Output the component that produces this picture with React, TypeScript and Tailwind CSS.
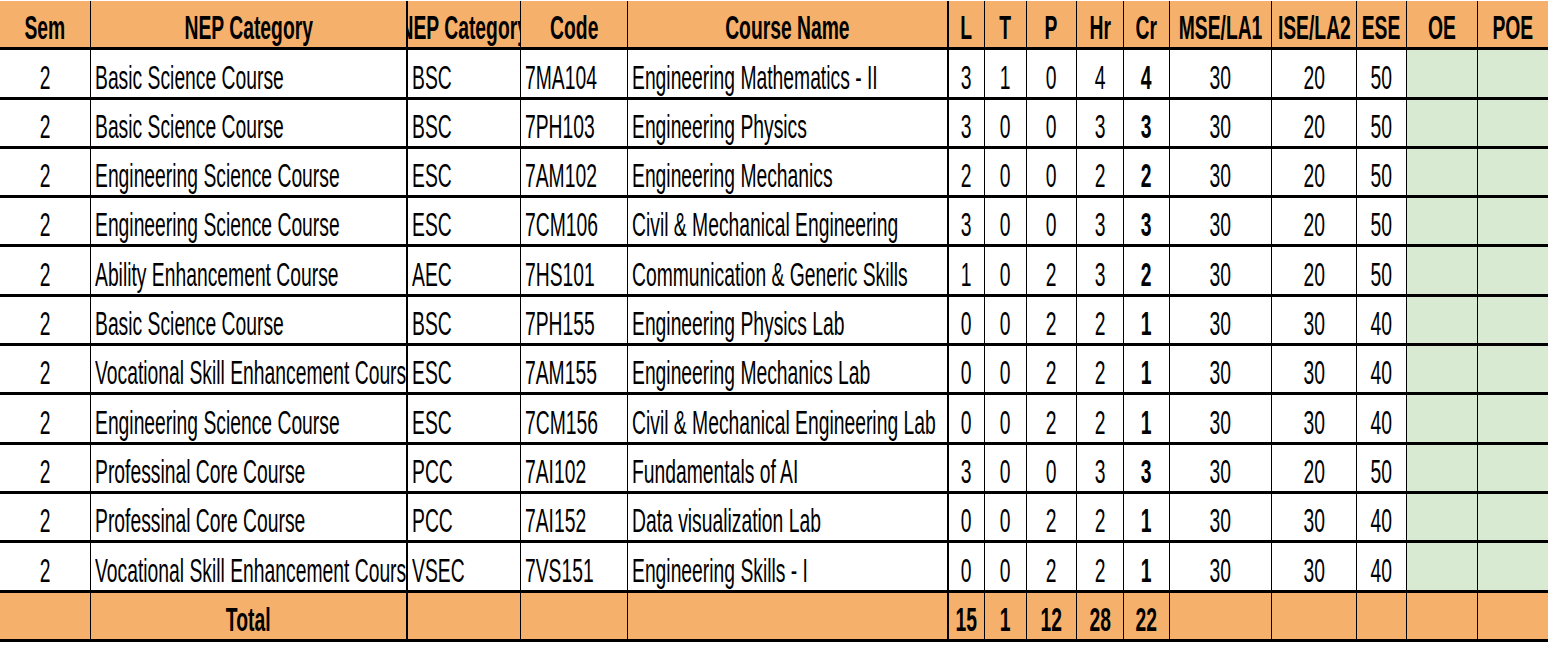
import React from "react";

type Align = "left" | "center";

const cols: { align: Align; thick?: boolean }[] = [
  { align: "center" },
  { align: "left" },
  { align: "left", thick: true },
  { align: "left" },
  { align: "left" },
  { align: "center", thick: true },
  { align: "center" },
  { align: "center" },
  { align: "center" },
  { align: "center" },
  { align: "center" },
  { align: "center" },
  { align: "center" },
  { align: "center" },
  { align: "center" },
];

const header = [
  "Sem",
  "NEP Category",
  "NEP Category",
  "Code",
  "Course Name",
  "L",
  "T",
  "P",
  "Hr",
  "Cr",
  "MSE/LA1",
  "ISE/LA2",
  "ESE",
  "OE",
  "POE",
];

const rows = [
  ["2", "Basic Science Course", "BSC", "7MA104", "Engineering Mathematics - II", "3", "1", "0", "4", "4", "30", "20", "50"],
  ["2", "Basic Science Course", "BSC", "7PH103", "Engineering Physics", "3", "0", "0", "3", "3", "30", "20", "50"],
  ["2", "Engineering Science Course", "ESC", "7AM102", "Engineering Mechanics", "2", "0", "0", "2", "2", "30", "20", "50"],
  ["2", "Engineering Science Course", "ESC", "7CM106", "Civil & Mechanical Engineering", "3", "0", "0", "3", "3", "30", "20", "50"],
  ["2", "Ability Enhancement Course", "AEC", "7HS101", "Communication & Generic Skills", "1", "0", "2", "3", "2", "30", "20", "50"],
  ["2", "Basic Science Course", "BSC", "7PH155", "Engineering Physics Lab", "0", "0", "2", "2", "1", "30", "30", "40"],
  ["2", "Vocational Skill Enhancement Course", "ESC", "7AM155", "Engineering Mechanics Lab", "0", "0", "2", "2", "1", "30", "30", "40"],
  ["2", "Engineering Science Course", "ESC", "7CM156", "Civil & Mechanical Engineering Lab", "0", "0", "2", "2", "1", "30", "30", "40"],
  ["2", "Professinal Core Course", "PCC", "7AI102", "Fundamentals of AI", "3", "0", "0", "3", "3", "30", "20", "50"],
  ["2", "Professinal Core Course", "PCC", "7AI152", "Data visualization Lab", "0", "0", "2", "2", "1", "30", "30", "40"],
  ["2", "Vocational Skill Enhancement Course", "VSEC", "7VS151", "Engineering Skills - I", "0", "0", "2", "2", "1", "30", "30", "40"],
];

const total = ["", "Total", "", "", "", "15", "1", "12", "28", "22", "", "", "", "", ""];

function Cell({
  text,
  col,
  bold,
  bg,
  centered,
}: {
  text: string;
  col: number;
  bold?: boolean;
  bg: string;
  centered?: boolean;
}) {
  const c = cols[col];
  const border = col === 0 ? "" : c.thick ? "border-l-2 border-black" : "border-l border-black";
  const center = centered || c.align === "center";
  return (
    <div
      className={`flex items-end overflow-hidden pb-[3px] ${border} ${bg} ${
        center ? "justify-center" : "justify-start pl-[4px]"
      }`}
    >
      <span
        className={`inline-block whitespace-nowrap scale-x-[0.585] ${
          center ? "origin-center" : "origin-left"
        } ${bold ? "font-bold" : ""}`}
      >
        {text}
      </span>
    </div>
  );
}

const rowCls =
  "grid grid-cols-[90px_316px_114px_107px_320px_37px_42px_50px_47px_46px_102px_85px_50px_71px_71px] h-[49.3px] border-b-[3px] border-black";

export default function App() {
  return (
    <div className="w-[1550px] h-[645px] bg-white pt-px font-['Liberation_Sans',Arial,sans-serif] text-[33px] leading-none text-black">
      <div className="w-[1548px]">
        <div className={rowCls}>
          {header.map((h, i) => (
            <Cell key={i} text={h} col={i} bold centered bg="bg-[#f5b16c]" />
          ))}
        </div>
        {rows.map((r, ri) => (
          <div key={ri} className={rowCls}>
            {cols.map((_, i) => (
              <Cell
                key={i}
                text={r[i] ?? ""}
                col={i}
                bold={i === 9}
                bg={i >= 13 ? "bg-[#d9ead3]" : "bg-white"}
              />
            ))}
          </div>
        ))}
        <div className={rowCls}>
          {total.map((t, i) => (
            <Cell key={i} text={t} col={i} bold centered bg="bg-[#f5b16c]" />
          ))}
        </div>
      </div>
    </div>
  );
}
